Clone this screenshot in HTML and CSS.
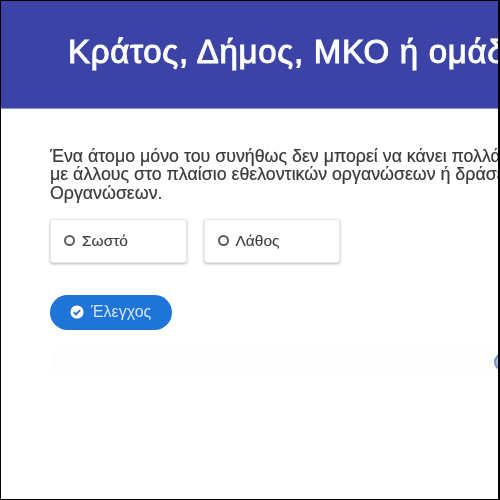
FILE: index.html
```html
<!DOCTYPE html>
<html lang="el">
<head>
<meta charset="utf-8">
<title>Κράτος, Δήμος, ΜΚΟ ή ομάδα</title>
<link rel="stylesheet" href="styles.css">
</head>
<body>
<div class="frame">
  <header class="banner"><h1 class="title">Κράτος, Δήμος, ΜΚΟ ή ομάδα πολιτών</h1></header>
  <main class="content">
    <p class="question">Ένα άτομο μόνο του συνήθως δεν μπορεί να κάνει πολλά πράγματα<br>με άλλους στο πλαίσιο εθελοντικών οργανώσεων ή δράσεων Μη Κυβερνητικών<br>Οργανώσεων.</p>
    <div class="options">
      <label class="option"><span class="radio"></span>Σωστό</label>
      <label class="option"><span class="radio"></span>Λάθος</label>
    </div>
    <button class="check" type="button">
      <svg class="check-icon" viewBox="0 0 16 16" aria-hidden="true"><circle cx="8" cy="8" r="7.5" fill="#fff"/><path d="M4.4 8.2l2.5 2.5 4.6-4.8" fill="none" stroke="#1f74d8" stroke-width="2.2"/></svg>
      Έλεγχος
    </button>
    <div class="next-row"><span class="next-dot"></span></div>
  </main>
</div>
</body>
</html>
```
FILE: styles.css
```css
* { box-sizing: border-box; }
html, body { margin: 0; padding: 0; }
body { width: 500px; height: 500px; background: #fff; font-family: "Liberation Sans", Arial, sans-serif; overflow: hidden; }
.frame { width: 500px; height: 500px; border: 1px solid #000; border-right-width: 2px; overflow: hidden; background: #fff; }
.banner { height: 108px; background: #3b43a6; border-bottom: 1px solid #8e93d6; display: flex; align-items: center; padding-left: 67px; overflow: hidden; }
.title { margin: 0; padding-bottom: 5px; font-size: 33px; font-weight: 400; letter-spacing: 0.7px; color: #fff; -webkit-text-stroke: 1px #fff; white-space: nowrap; filter: blur(0.5px); }
.content { padding: 38px 0 0 49px; }
.question { margin: 0; font-size: 17.8px; line-height: 18.3px; color: #3a3a3a; -webkit-text-stroke: 0.2px #3a3a3a; white-space: nowrap; filter: blur(0.4px); }
.options { display: flex; gap: 17px; margin-top: 17px; }
.option { width: 136.5px; height: 44px; display: flex; align-items: center; padding-left: 13px; gap: 7px; background: #fff; border-radius: 3px; border: 1px solid #e8e8e8; box-shadow: 0 1px 3px rgba(0,0,0,.28); font-size: 15.5px; color: #3f3f3f; -webkit-text-stroke: 0.15px #3f3f3f; filter: blur(0.35px); }
.radio { width: 11px; height: 11px; border: 2px solid #5e5e5e; border-radius: 50%; }
.check { margin-top: 32px; width: 122px; height: 35px; display: flex; align-items: center; gap: 7px; padding: 0 0 0 20px; border: 0; border-radius: 18px; background: #1f74d8; color: #d5e4f6; font-family: "Liberation Sans", Arial, sans-serif; font-size: 16px; filter: blur(0.4px); }
.check-icon { width: 14px; height: 14px; }
.next-row { display: flex; justify-content: flex-end; align-items: center; margin-top: 20px; overflow: hidden; height: 25px; background: #fdfdfd; }
.next-dot { flex: none; width: 18px; height: 18px; margin-right: -14px; border-radius: 50%; background: #a9c4e4; border: 2px solid #6e93bf; }
```
